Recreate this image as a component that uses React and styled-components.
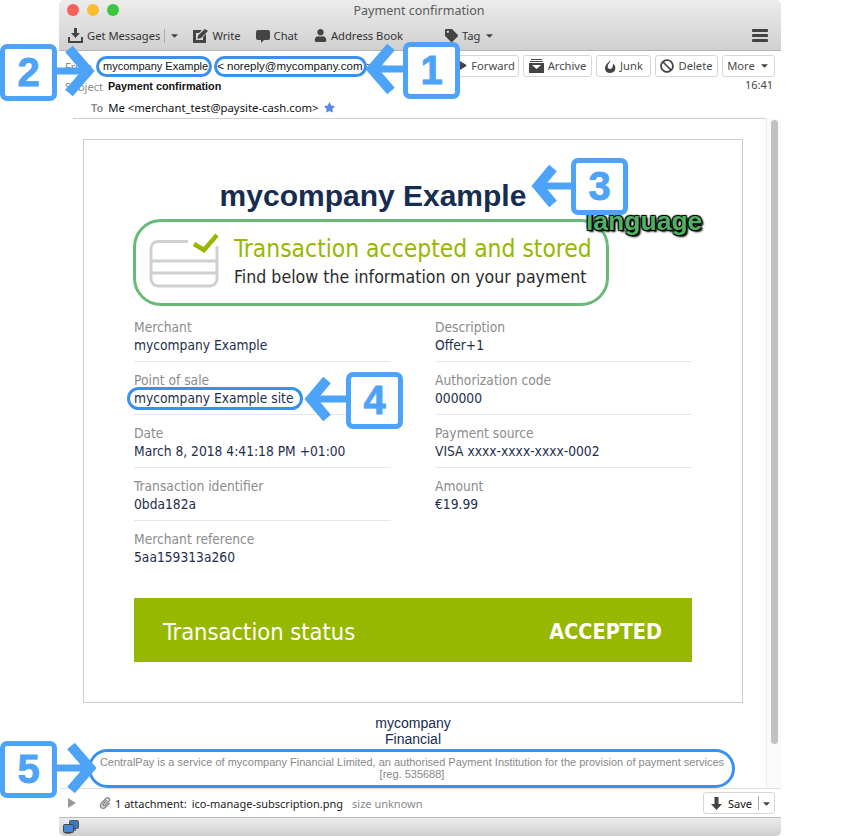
import React from "react";
import styled, { createGlobalStyle } from "styled-components";
import { FaStar, FaRegStar, FaTag, FaUser, FaBan, FaPaperclip, FaCaretDown, FaPlay } from "react-icons/fa";

const GlobalStyle = createGlobalStyle`
  html, body { margin: 0; padding: 0; background: #fff; }
`;

const Page = styled.div`
  position: relative;
  width: 850px;
  height: 836px;
  overflow: hidden;
  background: #fff;
`;

const Window = styled.div`
  margin-left: 59px;
  width: 722px;
  height: 836px;
  display: flex;
  flex-direction: column;
  font-family: "Noto Sans", sans-serif;
`;

const TopBar = styled.div`
  height: 51px;
  flex: none;
  box-sizing: border-box;
  background: linear-gradient(#ececec, #d0d0d0);
  border-bottom: 1px solid #b4b4b4;
  border-radius: 5px 5px 0 0;
  position: relative;
`;

const Lights = styled.div`
  position: absolute;
  left: 8px;
  top: 4px;
  display: flex;
  gap: 8px;
`;

const Light = styled.span`
  width: 12px;
  height: 12px;
  border-radius: 50%;
  background: ${(p) => p.$color};
`;

const Title = styled.div`
  height: 21px;
  line-height: 21px;
  text-align: center;
  font-size: 12.5px;
  color: #5a5a5a;
  padding-right: 2px;
`;

const Toolbar = styled.div`
  height: 29px;
  display: flex;
  align-items: center;
  padding: 0 13px 0 9px;
  font-size: 11.2px;
  color: #333;
`;

const ToolItem = styled.div`
  display: flex;
  align-items: center;
  gap: 4px;
  margin-left: ${(p) => p.$gap || 0}px;
  svg { flex: none; color: #444; }
`;

const ToolSep = styled.span`
  width: 1px;
  height: 14px;
  background: #aaa;
  margin: 0 ${(p) => p.$space || 4}px;
`;

const Hamburger = styled.div`
  margin-left: auto;
  display: flex;
  flex-direction: column;
  gap: 2px;
  span {
    display: block;
    width: 16px;
    height: 3px;
    border-radius: 1px;
    background: #444;
  }
`;

const Header = styled.div`
  height: 68px;
  flex: none;
  position: relative;
  font-size: 11.3px;
  color: #111;
`;

const FirstRow = styled.div`
  display: flex;
  align-items: center;
  height: 22px;
  margin-top: 4px;
  padding: 0 6px 0 6px;
`;

const HeaderLabel = styled.span`
  color: #8a8a8a;
  font-size: 11px;
  font-weight: ${(p) => p.$weight || 400};
`;

const Sender = styled.span`
  font-family: "Liberation Sans", sans-serif;
  font-size: ${(p) => p.$size}px;
  margin-left: ${(p) => p.$gap}px;
`;

const Actions = styled.div`
  margin-left: auto;
  display: flex;
  gap: 4px;
`;

const ActionButton = styled.div`
  height: 22px;
  box-sizing: border-box;
  width: ${(p) => p.$w}px;
  display: flex;
  align-items: center;
  justify-content: center;
  gap: 4px;
  padding-bottom: 1px;
  border: 1px solid #d6d6d6;
  border-radius: 3px;
  background: #fff;
  color: #4a4a4a;
  font-size: 11.2px;
  svg { flex: none; color: #444; }
`;

const TimeRow = styled.div`
  display: flex;
  align-items: center;
  height: 16px;
  margin-top: 1px;
  padding: 0 6px;
`;

const SubjectText = styled.span`
  font-family: "Liberation Sans", sans-serif;
  font-weight: 700;
  font-size: 10.8px;
  margin-left: 5px;
`;

const Time = styled.span`
  margin: 0 2px 4px auto;
  color: #444;
  font-size: 11px;
`;

const ToRow = styled.div`
  display: flex;
  align-items: center;
  gap: 5px;
  height: 17px;
  margin-top: 5px;
  padding-left: 32px;
  svg { color: #5b8ae6; }
`;

const HeaderRule = styled.div`
  position: absolute;
  left: 14px;
  right: 15px;
  bottom: 0;
  border-bottom: 1px solid #cfcfcf;
`;

const Main = styled.div`
  flex: 1;
  min-height: 0;
  display: flex;
`;

const Content = styled.div`
  flex: 1;
  min-width: 0;
  padding: 20px 23px 0 24px;
  font-family: "Liberation Sans", sans-serif;
`;

const Scrollbar = styled.div`
  width: 15px;
  flex: none;
  box-sizing: border-box;
  background: #fafafa;
  border-left: 1px solid #eee;
  padding: 1px 3px 0 4px;
`;

const Thumb = styled.div`
  height: 624px;
  border-radius: 4px;
  background: #c1c1c1;
`;

const Card = styled.div`
  box-sizing: border-box;
  width: 660px;
  height: 564px;
  border: 1px solid #ccc;
  padding: 0 50px;
`;

const CompanyName = styled.h1`
  margin: 37px 0 0 -50px;
  width: 578px;
  height: 42px;
  line-height: 38px;
  text-align: center;
  font-size: 30px;
  font-weight: 700;
  color: #162c50;
`;

const StatusBox = styled.div`
  box-sizing: border-box;
  margin-left: -1px;
  width: 476px;
  height: 87px;
  border: 3px solid #69ba79;
  border-radius: 28px;
  display: flex;
  align-items: center;
  padding: 0 0 1px 13px;
  svg { margin-bottom: 4px; flex: none; }
`;

const StatusText = styled.div`
  margin-left: 15px;
  font-family: "DejaVu Sans Condensed", "DejaVu Sans", sans-serif;
`;

const StatusTitle = styled.div`
  font-size: 24.4px;
  line-height: 30px;
  color: #97b800;
`;

const StatusSub = styled.div`
  font-size: 17.6px;
  line-height: 26px;
  color: #2b2b2b;
`;

const Details = styled.div`
  display: grid;
  grid-template-columns: 257px 257px;
  column-gap: 44px;
  margin-top: 3px;
`;

const Column = styled.div``;

const Detail = styled.div`
  box-sizing: border-box;
  height: 53px;
  padding-top: 9px;
  border-bottom: ${(p) => (p.$last ? "none" : "1px solid #e6e6e6")};
  font-family: "DejaVu Sans Condensed", "DejaVu Sans", sans-serif;
  font-size: 13.7px;
  line-height: 18px;
`;

const DetailLabel = styled.div`
  color: #8c8c8c;
`;

const DetailValue = styled.div`
  color: #1d2f4d;
`;

const Banner = styled.div`
  box-sizing: border-box;
  width: 558px;
  height: 64px;
  margin-top: 24px;
  padding: 3px 30px 0 29px;
  display: flex;
  align-items: center;
  justify-content: space-between;
  background: #97b800;
  color: #fff;
  font-family: "DejaVu Sans Condensed", "DejaVu Sans", sans-serif;
`;

const BannerTitle = styled.span`
  font-size: 23.5px;
`;

const BannerState = styled.span`
  font-size: 21.4px;
  font-weight: 700;
`;

const FooterName = styled.div`
  margin: 12px 0 0 0;
  text-align: center;
  font-size: 14px;
  line-height: 16px;
  color: #162c50;
`;

const Legal = styled.div`
  margin: 9px 2px 0 0;
  text-align: center;
  font-size: 11px;
  line-height: 12px;
  color: #888;
`;

const AttachmentBar = styled.div`
  height: 29px;
  flex: none;
  box-sizing: border-box;
  display: flex;
  align-items: center;
  border-top: 1px solid #e0e0e0;
  padding: 0 6px 0 9px;
  font-size: 11px;
  color: #222;
`;

const Muted = styled.span`
  color: #8a8a8a;
  margin-left: ${(p) => p.$gap}px;
`;

const AttachmentText = styled.span`
  margin-left: ${(p) => p.$gap}px;
`;

const SaveButton = styled.div`
  margin-left: auto;
  box-sizing: border-box;
  width: 72px;
  height: 22px;
  display: flex;
  align-items: center;
  padding-left: 7px;
  gap: 6px;
  border: 1px solid #d6d6d6;
  border-radius: 3px;
  font-size: 11px;
  color: #111;
  svg { flex: none; color: #444; }
`;

const SaveCaret = styled.div`
  display: flex;
  align-items: center;
  margin-left: -2px;
`;

const StatusBar = styled.div`
  height: 19px;
  flex: none;
  box-sizing: border-box;
  display: flex;
  align-items: center;
  padding-left: 4px;
  background: linear-gradient(#ececec, #cfcfcf);
  border-top: 1px solid #bbb;
  border-radius: 0 0 5px 5px;
`;

/* annotations laid over the screenshot */
const NumberBox = styled.div`
  position: absolute;
  left: ${(p) => p.$x}px;
  top: ${(p) => p.$y}px;
  box-sizing: border-box;
  width: 57px;
  height: 57px;
  display: flex;
  align-items: center;
  justify-content: center;
  border: 5px solid #4da3f7;
  border-radius: 7px;
  background: #fff;
  color: #4da3f7;
  font-family: "Liberation Sans", sans-serif;
  font-size: 40px;
  font-weight: 700;
  -webkit-text-stroke: 0.8px #4da3f7;
`;

const Pill = styled.div`
  position: absolute;
  left: ${(p) => p.$x}px;
  top: ${(p) => p.$y}px;
  width: ${(p) => p.$w}px;
  height: ${(p) => p.$h}px;
  box-sizing: border-box;
  border: 3px solid #3a90ee;
  border-radius: 20px;
`;

const Overlay = styled.svg`
  position: absolute;
  left: 0;
  top: 0;
  width: 850px;
  height: 836px;
  pointer-events: none;
`;

const LanguageTag = styled.div`
  position: absolute;
  left: 586px;
  top: 206px;
  font-family: "Liberation Sans", sans-serif;
  font-size: 26.5px;
  line-height: 30px;
  font-weight: 700;
  color: #4fb263;
  text-shadow: 1px 1px 1px #000, -1px -1px 1px #000, 1px -1px 1px #000, -1px 1px 1px #000, 2px 2px 2px #000;
`;

function Arrow({ tipX, y, dir, tail, arm }) {
  const back = tipX + dir * arm;
  return (
    <g fill="none" stroke="#4da3f7">
      <path d={`M${tipX + dir * 4} ${y}H${tail}`} strokeWidth="7" />
      <path d={`M${back} ${y - arm + 2}L${tipX + dir * 5} ${y}L${back} ${y + arm - 2}`} strokeWidth="10" />
    </g>
  );
}

const GetIcon = () => (
  <svg width="15" height="15" viewBox="0 0 15 15" fill="#444">
    <path d="M6 0h3v5h3l-4.500 5L3 5h3zM0 9h2v4h11V9h2v6H0z" />
  </svg>
);

const WriteIcon = () => (
  <svg width="15" height="14" viewBox="0 0 15 14" fill="#444">
    <path d="M0 1h9L6 4H3v7h7V8l3-3v9H0zM12 0l3 2-7 7-3.500 1L5 6.500z" />
  </svg>
);

const ChatIcon = () => (
  <svg width="14" height="14" viewBox="0 0 14 14" fill="#444">
    <path d="M2 1h10a2 2 0 0 1 2 2v6a2 2 0 0 1-2 2H8l-3 3v-3H2a2 2 0 0 1-2-2V3a2 2 0 0 1 2-2z" />
  </svg>
);

const ArchiveIcon = () => (
  <svg width="15" height="14" viewBox="0 0 15 14" fill="#444">
    <path d="M2 0h11v1H2zM1 2h13v1H1zM0 4h15v10H0zM3 6l4.500 4L12 6z" fillRule="evenodd" />
  </svg>
);

const JunkIcon = () => (
  <svg width="12" height="14" viewBox="0 0 12 14" fill="#444">
    <path d="M6 0C7 2 3 4 2 6 0 9 1 14 6 14s6-4 5-7C10 5 9 5 9 5c0 3-1 5-3 5S3 8 4 6C5 4 7 3 6 0z" />
  </svg>
);

const SaveIcon = () => (
  <svg width="11" height="13" viewBox="0 0 11 13" fill="#444">
    <path d="M3.500 0h4v7H11l-5.500 6L0 7h3.500z" />
  </svg>
);

const ExpandIcon = () => (
  <svg width="8" height="10" viewBox="0 0 8 10" fill="#999">
    <path d="M0 0l8 5-8 5z" />
  </svg>
);

const CardIcon = () => (
  <svg width="70" height="56" viewBox="0 0 70 56">
    <g fill="none" stroke="#d0d0d0" strokeWidth="3">
      <path d="M39 9.500H9a7 7 0 0 0-7 7V47a7 7 0 0 0 7 7h52a7 7 0 0 0 7-7V14" />
      <path d="M2 29h66M2 41h66" />
    </g>
    <path d="M45 12l10 6L68 3" fill="none" stroke="#97b800" strokeWidth="4.500" />
  </svg>
);

const NetworkIcon = () => (
  <svg width="16" height="15" viewBox="0 0 16 15">
    <path d="M9 9h4v2H9z" fill="#777" />
    <rect x="6.500" y="0.500" width="9" height="8" rx="1" fill="#3a78c0" stroke="#555" />
    <path d="M2 12h6v2H2z" fill="#777" />
    <rect x="0.500" y="4.500" width="10" height="8" rx="1" fill="#3f8ad8" stroke="#444" />
  </svg>
);

const leftDetails = [
  ["Merchant", "mycompany Example"],
  ["Point of sale", "mycompany Example site"],
  ["Date", "March 8, 2018 4:41:18 PM +01:00"],
  ["Transaction identifier", "0bda182a"],
  ["Merchant reference", "5aa159313a260"],
];

const rightDetails = [
  ["Description", "Offer+1"],
  ["Authorization code", "000000"],
  ["Payment source", "VISA xxxx-xxxx-xxxx-0002"],
  ["Amount", "€19.99"],
];

function DetailColumn({ items }) {
  return (
    <Column>
      {items.map(([label, value], i) => (
        <Detail key={label} $last={i === items.length - 1}>
          <DetailLabel>{label}</DetailLabel>
          <DetailValue>{value}</DetailValue>
        </Detail>
      ))}
    </Column>
  );
}

export default function App() {
  return (
    <Page>
      <GlobalStyle />
      <Window>
        <TopBar>
          <Lights>
            <Light $color="#f8605a" />
            <Light $color="#fdbb2e" />
            <Light $color="#3cc63f" />
          </Lights>
          <Title>Payment confirmation</Title>
          <Toolbar>
            <ToolItem><GetIcon />Get Messages</ToolItem>
            <ToolSep />
            <FaCaretDown size={11} color="#444" />
            <ToolItem $gap={13}><WriteIcon />Write</ToolItem>
            <ToolItem $gap={15}><ChatIcon />Chat</ToolItem>
            <ToolItem $gap={16}><FaUser size={13} />Address Book</ToolItem>
            <ToolItem $gap={42}><FaTag size={13} />Tag</ToolItem>
            <FaCaretDown size={11} color="#444" style={{ marginLeft: 4 }} />
            <Hamburger><span /><span /><span /></Hamburger>
          </Toolbar>
        </TopBar>
        <Header>
          <FirstRow>
            <HeaderLabel>From</HeaderLabel>
            <Sender $gap={11} $size={11}>mycompany Example</Sender>
            <Sender $gap={9} $size={11.5}>&lt; noreply@mycompany.com &gt;</Sender>
            <FaRegStar size={11} color="#9bb" style={{ marginLeft: 3 }} />
            <Actions>
              <ActionButton $w={65}><FaPlay size={9} />Forward</ActionButton>
              <ActionButton $w={69}><ArchiveIcon />Archive</ActionButton>
              <ActionButton $w={55}><JunkIcon />Junk</ActionButton>
              <ActionButton $w={63}><FaBan size={14} />Delete</ActionButton>
              <ActionButton $w={53}>More<FaCaretDown size={11} /></ActionButton>
            </Actions>
          </FirstRow>
          <TimeRow>
            <HeaderLabel>Subject</HeaderLabel>
            <SubjectText>Payment confirmation</SubjectText>
            <Time>16:41</Time>
          </TimeRow>
          <ToRow>
            <HeaderLabel $weight={600}>To</HeaderLabel>
            <span>Me &lt;merchant_test@paysite-cash.com&gt;</span>
            <FaStar size={11} />
          </ToRow>
          <HeaderRule />
        </Header>
        <Main>
          <Content>
            <Card>
              <CompanyName>mycompany Example</CompanyName>
              <StatusBox>
                <CardIcon />
                <StatusText>
                  <StatusTitle>Transaction accepted and stored</StatusTitle>
                  <StatusSub>Find below the information on your payment</StatusSub>
                </StatusText>
              </StatusBox>
              <Details>
                <DetailColumn items={leftDetails} />
                <DetailColumn items={rightDetails} />
              </Details>
              <Banner>
                <BannerTitle>Transaction status</BannerTitle>
                <BannerState>ACCEPTED</BannerState>
              </Banner>
            </Card>
            <FooterName>mycompany<br />Financial</FooterName>
            <Legal>
              CentralPay is a service of mycompany Financial Limited, an authorised Payment Institution for the provision of payment services<br />
              [reg. 535688]
            </Legal>
          </Content>
          <Scrollbar><Thumb /></Scrollbar>
        </Main>
        <AttachmentBar>
          <ExpandIcon />
          <FaPaperclip size={12} color="#888" style={{ marginLeft: 23 }} />
          <AttachmentText $gap={4}>1 attachment:</AttachmentText>
          <AttachmentText $gap={5}>ico-manage-subscription.png</AttachmentText>
          <Muted $gap={9}>size unknown</Muted>
          <SaveButton>
            <SaveIcon />Save
            <SaveCaret>
              <ToolSep $space={2} />
              <FaCaretDown size={11} />
            </SaveCaret>
          </SaveButton>
        </AttachmentBar>
        <StatusBar><NetworkIcon /></StatusBar>
      </Window>

      <Pill $x={96} $y={56} $w={116} $h={21} />
      <Pill $x={214} $y={56} $w={153} $h={21} />
      <Pill $x={127} $y={387} $w={176} $h={23} />
      <Pill $x={88} $y={749} $w={647} $h={39} />
      <LanguageTag>language</LanguageTag>
      <Overlay>
        <Arrow tipX={93} y={71} dir={-1} tail={56} arm={24} />
        <Arrow tipX={367} y={69} dir={1} tail={404} arm={24} />
        <Arrow tipX={533} y={186} dir={1} tail={571} arm={20} />
        <Arrow tipX={306} y={399} dir={1} tail={346} arm={21} />
        <Arrow tipX={95} y={768} dir={-1} tail={56} arm={24} />
      </Overlay>
      <NumberBox $x={0} $y={44}>2</NumberBox>
      <NumberBox $x={403} $y={42}>1</NumberBox>
      <NumberBox $x={571} $y={158}>3</NumberBox>
      <NumberBox $x={346} $y={372}>4</NumberBox>
      <NumberBox $x={0} $y={741}>5</NumberBox>
    </Page>
  );
}
